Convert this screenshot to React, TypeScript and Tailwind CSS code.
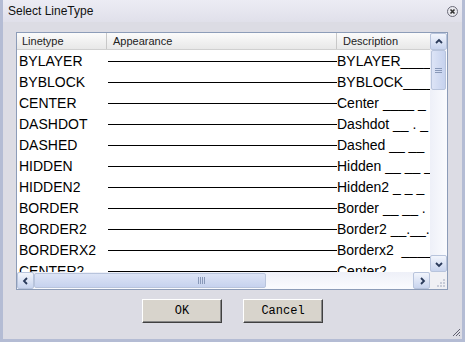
const rows: [string, string][] = [
  ['BYLAYER', 'BYLAYER______'],
  ['BYBLOCK', 'BYBLOCK______'],
  ['CENTER', 'Center ____ _'],
  ['DASHDOT', 'Dashdot __ . _'],
  ['DASHED', 'Dashed __ __'],
  ['HIDDEN', 'Hidden __ __ _'],
  ['HIDDEN2', 'Hidden2 _ _ _'],
  ['BORDER', 'Border __ __ .'],
  ['BORDER2', 'Border2 __.__.'],
  ['BORDERX2', 'Borderx2  ____'],
  ['CENTER2', 'Center2 ___ _'],
]

const Arrow = ({ dir }: { dir: 'up' | 'down' | 'left' | 'right' }) => {
  const d = {
    up: 'M2 6 L5 3 L8 6',
    down: 'M2 4 L5 7 L8 4',
    left: 'M6 2 L3 5 L6 8',
    right: 'M4 2 L7 5 L4 8',
  }[dir]
  return (
    <svg width="10" height="10" viewBox="0 0 10 10">
      <path d={d} fill="none" stroke="#2a3a5a" strokeWidth="1.8" />
    </svg>
  )
}

const ScrollBtn = ({ dir }: { dir: 'up' | 'down' | 'left' | 'right' }) => (
  <div className="w-[17px] h-[17px] flex items-center justify-center rounded-[2px] border border-[#b8c4dc] bg-gradient-to-b from-[#f2f5fc] to-[#c8d4ee]">
    <Arrow dir={dir} />
  </div>
)

export default function App() {
  return (
    <div
      className="w-[465px] h-[342px] flex flex-col bg-[#dcdce4] border-l-[3px] border-r-[3px] border-b-[3px] border-[#b4bcd4] overflow-hidden"
      style={{ fontFamily: '"Liberation Sans", Arial, sans-serif' }}
    >
      <div className="h-[22px] shrink-0 flex items-center justify-between pl-[5px] pr-[4px] bg-gradient-to-b from-[#ececf4] to-[#e0e0ea]">
        <span className="text-[12px] text-[#111]">Select LineType</span>
        <svg width="11" height="11" viewBox="0 0 11 11">
          <circle cx="5.5" cy="5.5" r="5" fill="#e8e8ee" stroke="#6a6a78" />
          <path d="M3.5 3.5 L7.5 7.5 M7.5 3.5 L3.5 7.5" stroke="#333" strokeWidth="1.6" />
        </svg>
      </div>
      <div className="flex-1 flex flex-col pl-[13px] pt-[10px]">
        <div className="w-[432px] h-[258px] border border-[#8c9cb8] bg-white flex flex-col">
          <div className="flex flex-1 min-h-0">
            <div className="w-[413px] overflow-hidden">
              <div className="h-[17px] flex text-[11px] text-[#222] bg-gradient-to-b from-[#fbfbfb] to-[#e8e8e8] border-b border-[#d0d0d0]">
                <div className="w-[90px] pl-[5px] flex items-center border-r border-[#c8c8c8]">Linetype</div>
                <div className="w-[230px] pl-[6px] flex items-center border-r border-[#c8c8c8]">Appearance</div>
                <div className="w-[93px] pl-[6px] flex items-center">Description</div>
              </div>
              <div className="pt-[1px]">
                {rows.map(([name, desc]) => (
                  <div key={name} className="h-[21px] flex items-center text-[14px] text-black">
                    <div className="w-[91px] pl-[2px] whitespace-nowrap">{name}</div>
                    <div className="w-[229px] h-px bg-black" />
                    <div className="w-[93px] whitespace-pre overflow-hidden">{desc}</div>
                  </div>
                ))}
              </div>
            </div>
            <div className="w-[17px] flex flex-col bg-gradient-to-r from-[#eef0f8] to-[#fafbfe]">
              <ScrollBtn dir="up" />
              <div className="h-[40px] mx-px rounded-[2px] border border-[#b8c4dc] bg-gradient-to-r from-[#dde4f6] to-[#c6d2ee] flex items-center justify-center">
                <div className="w-[7px] flex flex-col gap-[1px]">
                  <div className="h-px bg-[#8898b8]" />
                  <div className="h-px bg-[#8898b8]" />
                  <div className="h-px bg-[#8898b8]" />
                </div>
              </div>
              <div className="flex-1" />
              <ScrollBtn dir="down" />
            </div>
          </div>
          <div className="h-[17px] flex bg-gradient-to-b from-[#eef0f8] to-[#fafbfe]">
            <ScrollBtn dir="left" />
            <div className="w-[232px] my-px rounded-[2px] border border-[#b8c4dc] bg-gradient-to-b from-[#dde4f6] to-[#c6d2ee] flex items-center justify-end pr-[60px]">
              <div className="h-[7px] flex gap-[1px]">
                <div className="w-px bg-[#8898b8]" />
                <div className="w-px bg-[#8898b8]" />
                <div className="w-px bg-[#8898b8]" />
                <div className="w-px bg-[#8898b8]" />
              </div>
            </div>
            <div className="flex-1" />
            <ScrollBtn dir="right" />
            <div className="w-[17px] bg-[#f0f0f4] flex items-end justify-end p-[2px]">
              <svg width="10" height="10" viewBox="0 0 10 10" fill="#c8ccd8">
                <rect x="8" y="2" width="2" height="2" />
                <rect x="5" y="5" width="2" height="2" />
                <rect x="8" y="5" width="2" height="2" />
                <rect x="2" y="8" width="2" height="2" />
                <rect x="5" y="8" width="2" height="2" />
                <rect x="8" y="8" width="2" height="2" />
              </svg>
            </div>
          </div>
        </div>
        <div className="flex gap-[21px] pl-[126px] mt-[9px]">
          {['OK', 'Cancel'].map((t) => (
            <button
              key={t}
              className="w-[80px] h-[24px] bg-[#d8d4cc] border border-t-white border-l-white border-r-[#404040] border-b-[#404040] shadow-[inset_-1px_-1px_0_#888] text-[12px] text-black"
              style={{ fontFamily: '"Liberation Mono", "DejaVu Sans Mono", monospace' }}
            >
              {t}
            </button>
          ))}
        </div>
        <div className="flex-1 flex items-end justify-end pr-[1px] pb-[2px]">
          <svg width="10" height="10" viewBox="0 0 10 10" stroke="#606070" strokeWidth="1">
            <path d="M9 2 L2 9 M9 5 L5 9 M9 8 L8 9" />
          </svg>
        </div>
      </div>
    </div>
  )
}
